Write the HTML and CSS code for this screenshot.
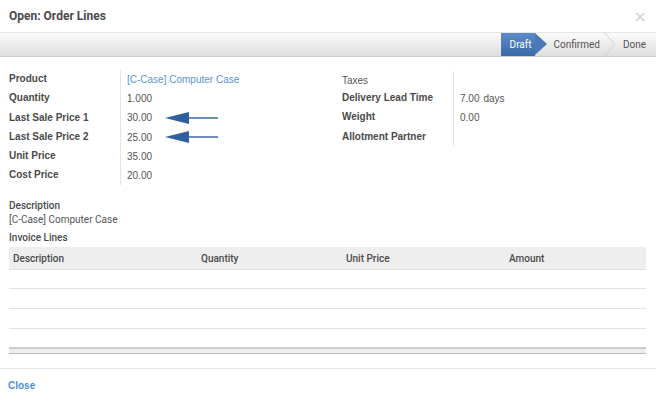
FILE: index.html
```html
<!DOCTYPE html>
<html>
<head>
<meta charset="utf-8">
<link rel="stylesheet" href="styles.css">
</head>
<body>
<div class="dialog">
  <div class="header">
    <h4 class="title">Open: Order Lines</h4>
    <span class="close-x">×</span>
  </div>
  <div class="statusbar">
    <div class="steps">
      <span class="step active">Draft</span>
      <span class="step">Confirmed</span>
      <svg class="chev" width="12" height="23" viewBox="0 0 12 23"><polyline points="0.5,0 11,11.5 0.5,23" fill="none" stroke="#d2d2d2" stroke-width="1"/></svg>
      <span class="step last">Done</span>
    </div>
  </div>
  <div class="body">
    <div class="groups">
      <div class="group left">
        <div class="lbl">Product</div><div class="val"><span class="link">[C-Case] Computer Case</span></div>
        <div class="lbl">Quantity</div><div class="val">1.000</div>
        <div class="lbl">Last Sale Price 1</div><div class="val">30.00<svg class="arrow" width="54" height="14" viewBox="0 0 54 14"><polygon points="0,7 24,1 24,13" fill="#2f5f9e"/><line x1="22" y1="7" x2="53" y2="7" stroke="#2f5f9e" stroke-width="1.4"/></svg></div>
        <div class="lbl">Last Sale Price 2</div><div class="val">25.00<svg class="arrow" width="54" height="14" viewBox="0 0 54 14"><polygon points="0,7 24,1 24,13" fill="#2f5f9e"/><line x1="22" y1="7" x2="53" y2="7" stroke="#2f5f9e" stroke-width="1.4"/></svg></div>
        <div class="lbl">Unit Price</div><div class="val">35.00</div>
        <div class="lbl">Cost Price</div><div class="val">20.00</div>
      </div>
      <div class="group right">
        <div class="lbl light">Taxes</div><div class="val"></div>
        <div class="lbl">Delivery Lead Time</div><div class="val">7.00 <span class="unit">days</span></div>
        <div class="lbl">Weight</div><div class="val">0.00</div>
        <div class="lbl">Allotment Partner</div><div class="val"></div>
      </div>
    </div>
    <div class="section-lbl">Description</div>
    <div class="desc">[C-Case] Computer Case</div>
    <div class="section-lbl inv">Invoice Lines</div>
    <table class="lines">
      <thead>
        <tr><th class="c1">Description</th><th class="c2">Quantity</th><th class="c3">Unit Price</th><th class="c4">Amount</th></tr>
      </thead>
      <tbody>
        <tr><td></td><td></td><td></td><td></td></tr>
        <tr><td></td><td></td><td></td><td></td></tr>
        <tr><td></td><td></td><td></td><td></td></tr>
        <tr><td></td><td></td><td></td><td></td></tr>
      </tbody>
      <tfoot>
        <tr><td colspan="4"></td></tr>
      </tfoot>
    </table>
  </div>
  <div class="footer">
    <span class="close-btn">Close</span>
  </div>
</div>
</body>
</html>
```

FILE: styles.css
```css
* { box-sizing: border-box; }
html, body { margin: 0; padding: 0; background: #fff; }
body { font-family: "Liberation Sans", Arial, sans-serif; color: #555; }
.dialog { width: 656px; height: 401px; background: #fff; display: flex; flex-direction: column; }
.header { height: 33px; display: flex; align-items: center; justify-content: space-between; padding: 0 9px; border-bottom: 1px solid #e5e5e5; }
.title { margin: 0; font-family: Roboto, sans-serif; font-weight: 700; font-size: 12px; color: #4a4a4a; }
.close-x { font-size: 16px; color: #d0d0d0; font-family: "DejaVu Sans", sans-serif; margin-right: 0; }
.statusbar { height: 24px; background: linear-gradient(#fbfbfb, #dedede); border-bottom: 1px solid #cfcfcf; display: flex; justify-content: flex-end; }
.steps { display: flex; align-items: stretch; font-family: Roboto, sans-serif; font-size: 10px; }
.step { display: flex; align-items: center; position: relative; color: #555; }
.step.active { background: linear-gradient(#5e8ccb, #3a69a8); color: #fff; padding: 0 3px 0 9px; margin-right: 12px; }
.step.active::after { content: ""; position: absolute; right: -12px; top: 0; border-top: 11.5px solid transparent; border-bottom: 11.5px solid transparent; border-left: 12px solid #4a79b8; }
.step:nth-child(2) { padding: 0 4px 0 7px; }
.chev { display: block; margin-right: 7px; }
.step.last { padding: 0 10px 0 0; }
.body { padding: 12px 8px 0 9px; flex: 1; }
.groups { display: flex; gap: 0; }
.group { display: grid; align-content: start; }
.group.left { width: 333px; grid-template-columns: 111px 1fr; }
.group.right { flex: 1; grid-template-columns: 111px 1fr; padding-top: 2px; }
.lbl { font-weight: bold; font-size: 10px; color: #4a4a4a; height: 19.3px; line-height: 20px; }
.lbl.light { font-weight: normal; color: #555; height: 17px; line-height: 20px; }
.val { border-left: 1px solid #e4e4e4; padding-left: 6px; font-size: 10px; color: #555; height: 19.3px; line-height: 21px; display: flex; align-items: center; padding-top: 1px; }
.group.right .val:nth-child(2) { height: 17px; }
.link { color: #5b93cf; }
.unit { margin-left: 4px; }
.arrow { margin-left: 13px; display: block; }
.section-lbl { font-family: Roboto, sans-serif; font-weight: 500; font-size: 10px; color: #4a4a4a; margin-top: 15px; }
.desc { font-family: Roboto, sans-serif; font-size: 10px; color: #555; margin-top: 3px; }
.section-lbl.inv { margin-top: 7px; }
.lines { width: 637px; margin-top: 4px; border-collapse: collapse; font-family: Roboto, sans-serif; font-size: 10px; }
.lines th { background: #eee; height: 23px; text-align: left; font-weight: 500; color: #4a4a4a; padding: 0 4px; border-bottom: 1px solid #e2e2e2; }
.lines .c1 { width: 188px; }
.lines .c2 { width: 145px; }
.lines .c3 { width: 163px; }
.lines tbody td { height: 20px; border-bottom: 1px solid #e2e2e2; }
.lines tbody tr:first-child td { height: 19px; }
.lines tbody tr:last-child td { border-bottom: none; height: 19px; }
.lines tfoot td { height: 6px; background: #eee; border-top: 2px solid #cbcbcb; border-bottom: 1px solid #bdbdbd; }
.footer { height: 33px; border-top: 1px solid #e5e5e5; padding: 0 8px; display: flex; align-items: center; }
.close-btn { font-weight: bold; font-size: 10px; color: #4a90d9; }
```
